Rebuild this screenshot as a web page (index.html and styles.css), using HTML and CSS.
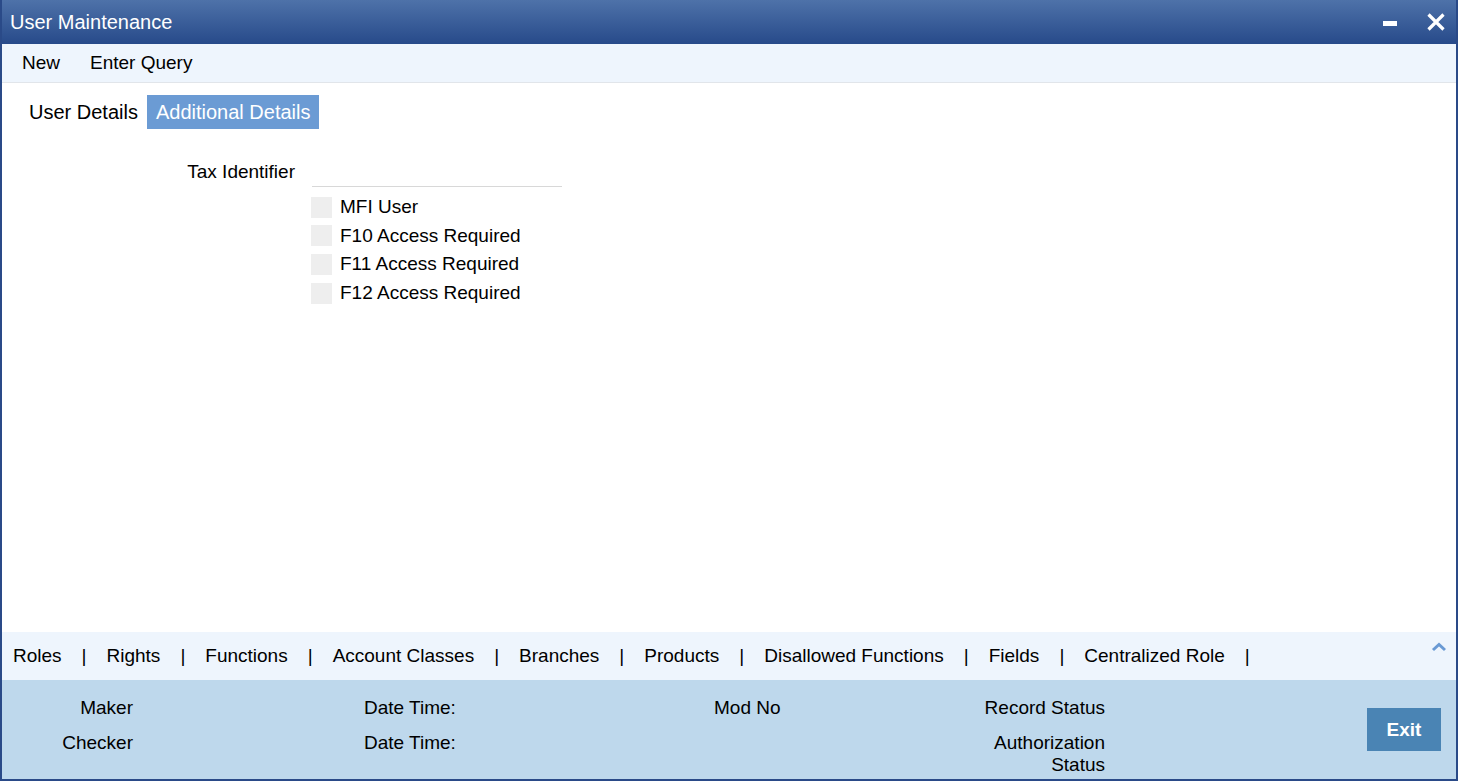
FILE: index.html
```html
<!DOCTYPE html>
<html lang="en">

<head>
  <meta charset="UTF-8">
  <meta name="viewport" content="width=device-width, initial-scale=1.0">
  <title>User Maintenance</title>
  <link rel="stylesheet" href="styles.css">
</head>

<body>
  <div class="window">
    <div class="titlebar">
      <h1>User Maintenance</h1>
      <div class="win-controls">
        <button class="win-button" title="Minimize">
          <svg width="16" height="16" viewBox="0 0 16 16"><rect x="1" y="7" width="14" height="5" fill="#fff"/></svg>
        </button>
        <button class="win-button" title="Close">
          <svg width="20" height="20" viewBox="0 0 20 20"><path d="M2.5 2.5 L17.5 17.5 M17.5 2.5 L2.5 17.5" stroke="#fff" stroke-width="3.2" fill="none"/></svg>
        </button>
      </div>
    </div>

    <div class="toolbar">
      <a class="tool-link">New</a>
      <a class="tool-link">Enter Query</a>
    </div>

    <div class="main">
      <div class="tabs">
        <span class="tab">User Details</span>
        <span class="tab tab-active">Additional Details</span>
      </div>

      <div class="form">
        <label class="field-label">Tax Identifier</label>
        <input class="field-input" type="text">

        <div class="check-list">
          <label class="check-row"><span class="check-box"></span>MFI User</label>
          <label class="check-row"><span class="check-box"></span>F10 Access Required</label>
          <label class="check-row"><span class="check-box"></span>F11 Access Required</label>
          <label class="check-row"><span class="check-box"></span>F12 Access Required</label>
        </div>
      </div>
    </div>

    <div class="subtabs">
      <div class="subtab-list">
        <a class="subtab">Roles</a><span class="sep">|</span>
        <a class="subtab">Rights</a><span class="sep">|</span>
        <a class="subtab">Functions</a><span class="sep">|</span>
        <a class="subtab">Account Classes</a><span class="sep">|</span>
        <a class="subtab">Branches</a><span class="sep">|</span>
        <a class="subtab">Products</a><span class="sep">|</span>
        <a class="subtab">Disallowed Functions</a><span class="sep">|</span>
        <a class="subtab">Fields</a><span class="sep">|</span>
        <a class="subtab">Centralized Role</a><span class="sep">|</span>
      </div>
      <svg class="chevron" width="16" height="12" viewBox="0 0 16 12"><path d="M2 9 L8 3.5 L14 9" stroke="#6a9ad4" stroke-width="3" fill="none"/></svg>
    </div>

    <div class="footer">
      <div class="audit">
        <span class="audit-label right">Maker</span>
        <span></span>
        <span class="audit-label">Date Time:</span>
        <span class="audit-label">Mod No</span>
        <span class="audit-label right">Record Status</span>

        <span class="audit-label right">Checker</span>
        <span></span>
        <span class="audit-label">Date Time:</span>
        <span></span>
        <span class="audit-label right">Authorization Status</span>
      </div>
      <button class="exit-button">Exit</button>
    </div>
  </div>
</body>

</html>
```

FILE: styles.css
```css
body {
  font-family: "Liberation Sans", Arial, sans-serif;
  margin: 0;
  padding: 0;
  background-color: #fff;
  color: #000;
}

.window {
  width: 1458px;
  height: 781px;
  box-sizing: border-box;
  border: 2px solid #2a4a88;
  border-top: none;
  display: flex;
  flex-direction: column;
  background-color: #fff;
}

.titlebar {
  height: 44px;
  flex-shrink: 0;
  background: linear-gradient(#4e72a9, #274a8a);
  display: flex;
  justify-content: space-between;
  align-items: center;
  padding: 0 10px 0 8px;
}

h1 {
  margin: 0;
  font-size: 20px;
  font-weight: normal;
  color: white;
}

.win-controls {
  display: flex;
  align-items: center;
  gap: 28px;
}

.win-button {
  background: none;
  border: none;
  padding: 0;
  display: flex;
  cursor: pointer;
}

.toolbar {
  height: 38px;
  flex-shrink: 0;
  background-color: #eef5fd;
  border-bottom: 1px solid #e1e5ea;
  display: flex;
  align-items: center;
  gap: 30px;
  padding-left: 20px;
  font-size: 19px;
}

.tool-link {
  cursor: pointer;
}

.main {
  flex: 1;
}

.tabs {
  display: flex;
  padding: 12px 0 0 18px;
}

.tab {
  font-size: 20px;
  height: 34px;
  line-height: 34px;
  padding: 0 9px;
}

.tab-active {
  background-color: #6b9bd4;
  color: white;
}

.form {
  display: grid;
  grid-template-columns: 293px 250px;
  column-gap: 17px;
  margin-top: 30px;
  font-size: 19px;
}

.field-label {
  text-align: right;
  height: 28px;
  line-height: 26px;
}

.field-input {
  height: 28px;
  box-sizing: border-box;
  border: none;
  border-bottom: 1px solid #d8d8d8;
  outline: none;
  padding: 0;
}

.check-list {
  grid-column: 2;
  padding-top: 6px;
  margin-left: -1px;
}

.check-row {
  display: flex;
  align-items: center;
  height: 28.6px;
}

.check-box {
  width: 21px;
  height: 21px;
  background-color: #eeeeee;
  margin-right: 8px;
}

.subtabs {
  height: 48px;
  flex-shrink: 0;
  background-color: #eef5fd;
  display: flex;
  justify-content: space-between;
  padding: 0 9px 0 11px;
}

.subtab-list {
  display: flex;
  align-items: center;
  font-size: 19px;
}

.subtab {
  cursor: pointer;
}

.sep {
  margin: 0 20px;
}

.chevron {
  margin-top: 9px;
}

.footer {
  height: 99px;
  flex-shrink: 0;
  background-color: #bed8ec;
  display: flex;
  align-items: flex-start;
}

.audit {
  display: grid;
  grid-template-columns: 131px 231px 350px 270px 121px;
  row-gap: 13px;
  padding-top: 17px;
  font-size: 19px;
  line-height: 22px;
}

.right {
  text-align: right;
}

.exit-button {
  margin: 28px 15px 0 auto;
  width: 74px;
  height: 43px;
  background-color: #4a84b4;
  color: white;
  border: none;
  font-family: inherit;
  font-size: 19px;
  font-weight: bold;
  cursor: pointer;
}
```
